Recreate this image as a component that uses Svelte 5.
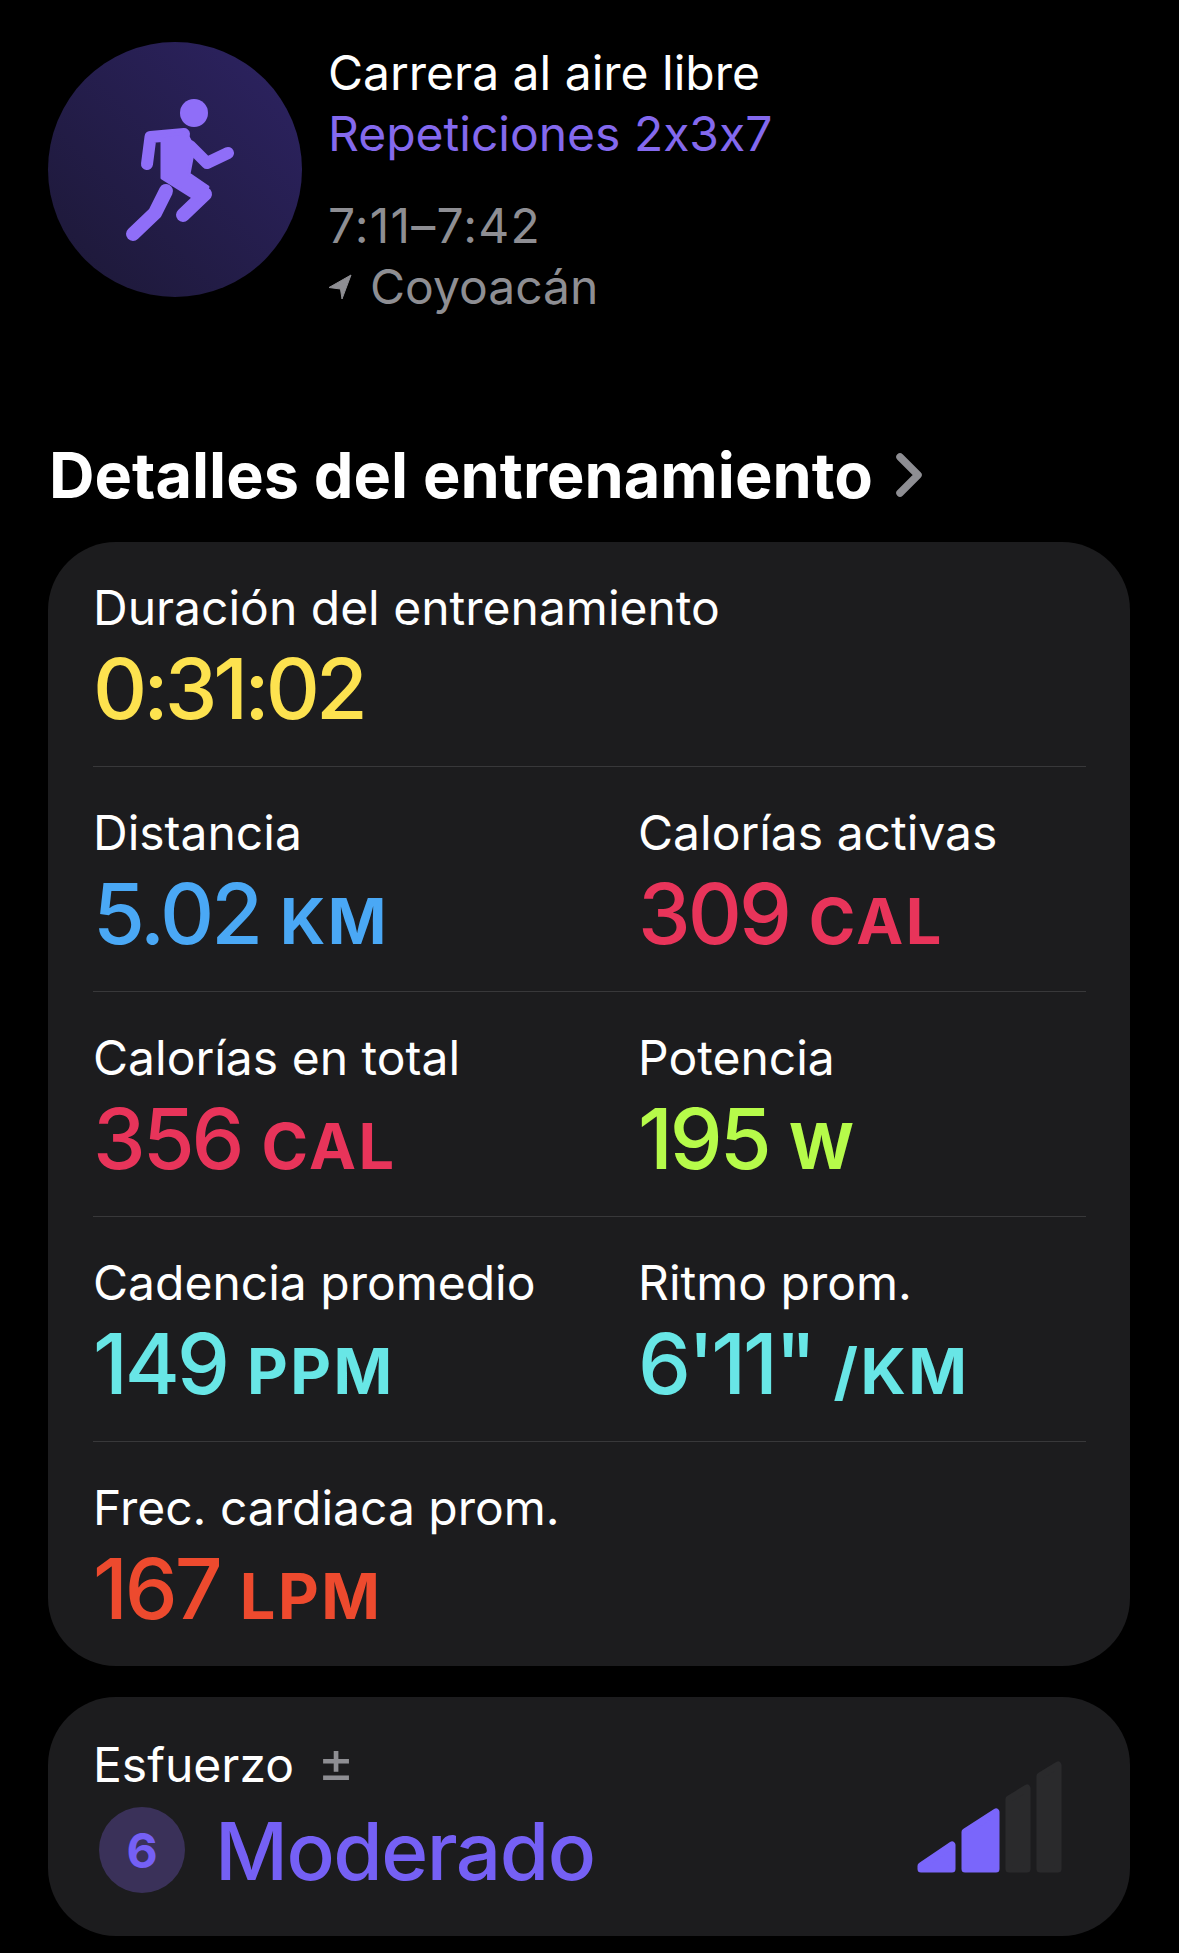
<script>
  const rows = [
    [{ label: 'Duración del entrenamiento', value: '0:31:02', unit: '', color: '#fde24f' }],
    [
      { label: 'Distancia', value: '5.02', unit: 'KM', color: '#4aa8f5' },
      { label: 'Calorías activas', value: '309', unit: 'CAL', color: '#e8345a' }
    ],
    [
      { label: 'Calorías en total', value: '356', unit: 'CAL', color: '#e8345a' },
      { label: 'Potencia', value: '195', unit: 'W', color: '#b6fb4a' }
    ],
    [
      { label: 'Cadencia promedio', value: '149', unit: 'PPM', color: '#68e6e6' },
      { label: 'Ritmo prom.', value: `6'11"`, unit: '/KM', color: '#68e6e6' }
    ],
    [{ label: 'Frec. cardiaca prom.', value: '167', unit: 'LPM', color: '#ed4a2e' }]
  ];
</script>

<main class="page">
  <header class="summary">
    <div class="avatar">
      <svg class="runner" viewBox="48 42 254 255" width="254" height="255">
        <circle cx="194" cy="113" r="14" fill="#8f6ef8" />
        <path class="limb" d="M147 164 L150.5 137 L184 134" />
        <path class="limb" d="M190 146 L207 163 L228 153" />
        <path class="limb leg" d="M166 191 L155 213 L133 234" />
        <path class="limb leg" d="M198 190 L205 194 L183 215" />
        <path class="body" d="M162 136 L186 133 L194 148 L189 174 L208 187 L197 200 L162 178 Z" />
      </svg>
    </div>
    <div class="info">
      <div class="name">Carrera al aire libre</div>
      <div class="plan">Repeticiones 2x3x7</div>
      <div class="time">7:11–7:42</div>
      <div class="place">
        <svg viewBox="0 0 24 26" width="24" height="26">
          <path d="M23 1 L1 13.5 L12.5 15 L14 25 Z" fill="#8e8e93" stroke="#8e8e93" stroke-width="1" stroke-linejoin="round" />
        </svg>
        Coyoacán
      </div>
    </div>
  </header>

  <h2 class="heading">
    Detalles del entrenamiento
    <svg viewBox="0 0 30 46" width="30" height="46">
      <path d="M6 5 L24 23 L6 41" fill="none" stroke="#8e8e93" stroke-width="7.5" stroke-linecap="round" stroke-linejoin="round" />
    </svg>
  </h2>

  <section class="card details">
    {#each rows as row}
      <div class="row">
        {#each row as stat}
          <div class="stat">
            <div class="label">{stat.label}</div>
            <div class="value" style="color: {stat.color}">
              {stat.value}{#if stat.unit}<span class="unit">{stat.unit}</span>{/if}
            </div>
          </div>
        {/each}
      </div>
    {/each}
  </section>

  <section class="card effort">
    <div class="effort-text">
      <div class="label">Esfuerzo <span class="plusminus">±</span></div>
      <div class="effort-value">
        <span class="badge">6</span>
        <span class="level">Moderado</span>
      </div>
    </div>
    <svg class="bars" viewBox="0 0 146 112" width="146" height="112">
      <path class="on" d="M4 108 L4 105 L35 84 L35 108 Z" />
      <path class="on" d="M48 108 L48 71 L79 51 L79 108 Z" />
      <path class="off" d="M92 108 L92 38 L110 27 L110 108 Z" />
      <path class="off" d="M123 108 L123 15 L141 4 L141 108 Z" />
    </svg>
  </section>
</main>

<style>
  :global(body) {
    margin: 0;
    background: #000;
  }

  .page {
    width: 1179px;
    height: 1953px;
    overflow: hidden;
    background: #000;
    box-sizing: border-box;
    padding: 42px 49px 0 48px;
    font-family: Inter, "Liberation Sans", sans-serif;
    font-feature-settings: "calt" 0;
    color: #fff;
  }

  .summary {
    display: flex;
    gap: 26px;
    height: 255px;
  }

  .avatar {
    width: 254px;
    height: 255px;
    flex: none;
    border-radius: 50%;
    background: linear-gradient(45deg, #1c1835, #2d2363);
  }

  .runner {
    display: block;
  }

  .limb {
    fill: none;
    stroke: #8f6ef8;
    stroke-width: 12;
    stroke-linecap: round;
    stroke-linejoin: round;
  }

  .leg {
    stroke-width: 14;
  }

  .body {
    fill: #8f6ef8;
    stroke: #8f6ef8;
    stroke-width: 3;
    stroke-linejoin: round;
  }

  .info {
    font-size: 48px;
    line-height: 61px;
  }

  .plan {
    color: #8469ee;
  }

  .time {
    margin-top: 31px;
    color: #8e8e93;
    letter-spacing: 1.2px;
  }

  .place {
    color: #8e8e93;
    display: flex;
    align-items: center;
    gap: 18px;
  }

  .heading {
    margin: 140px 0 0 1px;
    height: 105px;
    font-size: 63px;
    line-height: 76px;
    font-weight: 700;
    display: flex;
    align-items: flex-start;
    gap: 21px;
  }

  .heading svg {
    margin-top: 15px;
  }

  .card {
    background: #1c1c1e;
    border-radius: 68px;
  }

  .details {
    padding: 0 44px 0 45px;
    height: 1124px;
  }

  .row {
    display: grid;
    grid-template-columns: 545px 1fr;
    height: 225px;
    box-sizing: border-box;
    padding-top: 38px;
    border-bottom: 1px solid #38383a;
  }

  .row:last-child {
    border-bottom: 0;
  }

  .stat:only-child {
    grid-column: 1 / -1;
  }

  .label {
    font-size: 48px;
    line-height: 56px;
  }

  .value {
    font-size: 84px;
    line-height: 106px;
    font-weight: 550;
    letter-spacing: -3px;
    white-space: nowrap;
  }

  .row:first-child .value {
    letter-spacing: -4px;
  }

  .unit {
    font-size: 63px;
    font-weight: 700;
    letter-spacing: 2.5px;
    margin-left: 20px;
  }

  .effort {
    margin-top: 31px;
    height: 239px;
    padding: 40px 67px 0 45px;
    box-sizing: border-box;
    display: flex;
    justify-content: space-between;
    align-items: flex-start;
  }

  .plusminus {
    color: #8e8e93;
    font-size: 56px;
    margin-left: 10px;
    line-height: 40px;
  }

  .effort-value {
    display: flex;
    align-items: center;
    gap: 30px;
    margin-top: 14px;
    margin-left: 6px;
  }

  .badge {
    width: 86px;
    height: 86px;
    border-radius: 50%;
    background: #3a3159;
    color: #7560f5;
    font-size: 48px;
    font-weight: 700;
    display: flex;
    align-items: center;
    justify-content: center;
  }

  .level {
    font-size: 80px;
    line-height: 85px;
    font-weight: 550;
    letter-spacing: -1.5px;
    color: #7560f5;
  }

  .bars {
    margin-top: 24px;
    flex: none;
  }

  .on,
  .off {
    stroke-width: 7;
    stroke-linejoin: round;
  }

  .on {
    fill: #7a66fb;
    stroke: #7a66fb;
  }

  .off {
    fill: #2a2a2c;
    stroke: #2a2a2c;
  }
</style>
